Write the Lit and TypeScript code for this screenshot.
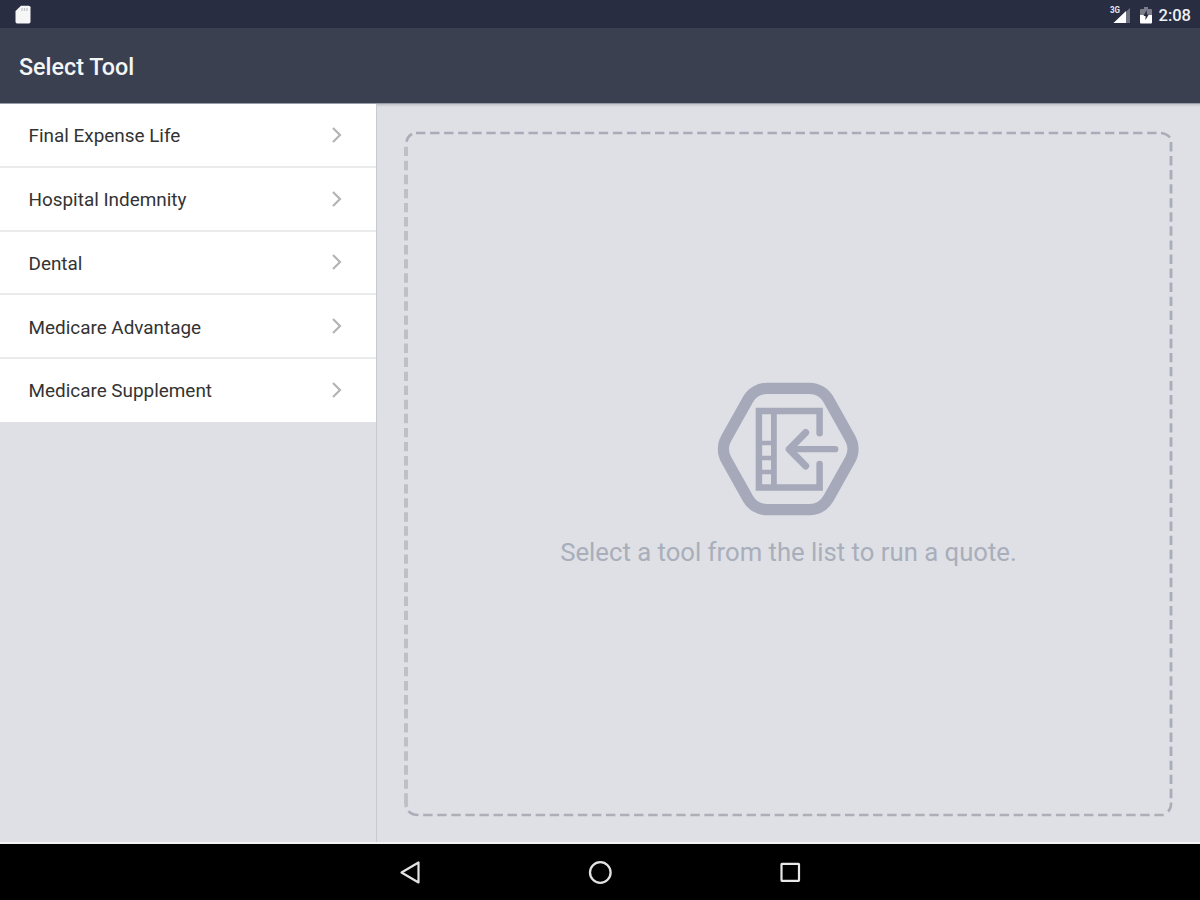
import { LitElement, html, css, svg } from "lit";
import { customElement, property } from "lit/decorators.js";

const TOOLS = [
  "Final Expense Life",
  "Hospital Indemnity",
  "Dental",
  "Medicare Advantage",
  "Medicare Supplement",
];

/** Android status bar: SD card on the left, signal, battery and clock on the right. */
@customElement("status-bar")
export class StatusBar extends LitElement {
  @property()
  time = "";

  static styles = css`
    :host {
      display: flex;
      align-items: center;
      justify-content: space-between;
      box-sizing: border-box;
      height: 28px;
      padding: 2px 9px 0 15px;
      background: #292d42;
      color: #eff0f3;
    }

    svg {
      display: block;
    }

    .system {
      display: flex;
      align-items: center;
    }

    .battery {
      margin: 0 7px 0 9px;
    }

    .time {
      padding-top: 1px;
      font-size: 16.5px;
      line-height: 26px;
      font-weight: 500;
    }

    .network {
      font-size: 9px;
      font-weight: 700;
    }
  `;

  render() {
    return html`
      <svg width="16" height="20" viewBox="0 0 16 20">
        <path d="M6 0.8h7.500q2 0 2 1.500v14.500q0 1.700-1.700 1.700H2.200q-1.700 0-1.700-1.700V6z" fill="#f6f6f6" />
        <path d="M7 3v3M9.500 3v3M12 3v3" stroke="#c4c5c9" stroke-width="1.300" />
      </svg>
      <div class="system">
        <svg width="21" height="20" viewBox="0 0 21 20">
          <path d="M20 3V18H4z" fill="#6e717f" />
          <path d="M16 6v12H3.500z" fill="#fff" />
          <text class="network" x="0" y="8" fill="#e4e5e8" textLength="10" lengthAdjust="spacingAndGlyphs">3G</text>
        </svg>
        <svg class="battery" width="12" height="18" viewBox="0 0 12 18">
          <path d="M4 1h4v2h3q1 0 1 1v5H0V4q0-1 1-1h3z" fill="#7b7e8a" />
          <path d="M0 9h12v7.500q0 1-1 1H1q-1 0-1-1z" fill="#fff" />
          <path d="M6.500 4L3.500 10H5.500v4L8.800 8.500H7z" fill="#292d42" />
        </svg>
        <span class="time">${this.time}</span>
      </div>
    `;
  }
}

@customElement("tool-list")
export class ToolList extends LitElement {
  @property({ type: Array })
  items: string[] = [];

  static styles = css`
    :host {
      display: block;
    }

    .row {
      display: flex;
      align-items: center;
      justify-content: space-between;
      box-sizing: border-box;
      height: 63.8px;
      padding: 0 34px 0 28.500px;
      background: #fff;
      border-bottom: 2px solid #eaebed;
      color: #333;
      font-size: 18.9px;
    }

    .row:last-child {
      height: 63px;
      border-bottom-color: #fff;
    }

    .label {
      padding-top: 2px;
    }

    .chevron {
      display: block;
    }
  `;

  render() {
    return this.items.map(
      (item) => html`
        <div class="row">
          <span class="label">${item}</span>
          <svg class="chevron" width="11" height="18" viewBox="0 0 11 18">
            <path d="M2 2l7 7-7 7" fill="none" stroke="#b4b4b4" stroke-width="2.200" />
          </svg>
        </div>
      `
    );
  }
}

@customElement("empty-panel")
export class EmptyPanel extends LitElement {
  static styles = css`
    :host {
      display: grid;
      overflow: hidden;
    }

    .frame,
    .content {
      grid-area: 1 / 1;
    }

    .frame {
      display: block;
    }

    .content {
      display: flex;
      flex-direction: column;
      align-items: center;
      padding-top: 266px;
    }

    .content svg {
      display: block;
    }

    .hint {
      margin: 4px 0 0;
      color: #a9aebb;
      font-size: 25.700px;
      line-height: 36px;
      white-space: nowrap;
    }
  `;

  private icon() {
    return svg`
      <g fill="none" stroke="#a5a9b9">
        <path stroke-width="11.300" d="M26.700 68L48.300 29.400A22 22 0 0 1 67.200 18.300H109.800A22 22 0 0 1 128.700 29.400L150.300 68A22 22 0 0 1 150.300 90L128.700 128.600A22 22 0 0 1 109.800 139.700H67.200A22 22 0 0 1 48.300 128.600L26.700 90A22 22 0 0 1 26.700 68Z" />
        <path stroke-width="6.500" stroke-linecap="round" d="M119.900 63.300V41H59.200V117.500H119.900V94" />
        <path stroke-width="5.800" d="M74.200 41V117.500" />
        <path stroke-width="4.500" d="M59 73H74M59 88H74M59 102H74" />
        <path stroke-width="6.300" stroke-linecap="round" stroke-linejoin="round" d="M135.500 79.200H90" />
        <path stroke-width="7" stroke-linecap="round" stroke-linejoin="round" d="M106 62.500L89.500 79.200L106 96" />
      </g>
    `;
  }

  render() {
    return html`
      <svg class="frame" width="823" height="740" viewBox="377 104 823 740">
        <g fill="none" stroke-dasharray="9.400 4.660">
          <path d="M416 133H1158" stroke="#a9acb8" stroke-width="2.600" />
          <path d="M1171 142V799" stroke="#a9adba" stroke-width="2.800" />
          <path d="M423.200 815H1164" stroke="#acafb8" stroke-width="2.600" />
          <path d="M406 146.700V790" stroke="#bec0c6" stroke-width="4" />
        </g>
        <g fill="none" stroke="#abaeb9" stroke-width="2.600">
          <path d="M406.500 141.700Q407.500 136.500 412 134" />
          <path d="M1161 133Q1166.500 133.500 1170 137.500" />
          <path d="M1171 802.500Q1171.500 808 1168 811.500" />
          <path d="M408.500 811Q411.500 815 418.500 815" />
        </g>
        <path d="M406 793.300V803Q406 805.500 406.700 807" fill="none" stroke="#bec0c6" stroke-width="3.800" />
      </svg>
      <div class="content">
        <svg width="180" height="160" viewBox="-0.700 0 180 160">${this.icon()}</svg>
        <p class="hint">Select a tool from the list to run a quote.</p>
      </div>
    `;
  }
}

@customElement("nav-bar")
export class NavBar extends LitElement {
  static styles = css`
    :host {
      display: flex;
      align-items: center;
      justify-content: center;
      gap: 166px;
      height: 56px;
      background: #000;
    }

    svg {
      display: block;
    }
  `;

  render() {
    return html`
      <svg width="24" height="24" viewBox="0 -0.500 24 24">
        <path d="M20.500 2V22L3.500 12z" fill="none" stroke="#e2e2e2" stroke-width="2.200" stroke-linejoin="round" />
      </svg>
      <svg width="24" height="24" viewBox="0 -0.500 24 24">
        <circle cx="12.300" cy="12" r="10.300" fill="none" stroke="#e2e2e2" stroke-width="2.300" />
      </svg>
      <svg width="24" height="24" viewBox="0 -0.500 24 24">
        <rect x="3.500" y="3.300" width="17.500" height="17" rx="0.500" fill="none" stroke="#e8e8e8" stroke-width="2.200" />
      </svg>
    `;
  }
}

@customElement("app-root")
export class AppRoot extends LitElement {
  static styles = css`
    :host {
      display: flex;
      flex-direction: column;
      height: 900px;
      overflow: hidden;
      background: #dee0e5;
      font-family: Roboto, "Liberation Sans", sans-serif;
    }

    .toolbar {
      box-sizing: border-box;
      height: 75px;
      padding: 2px 19px 0;
      background: #3a4050;
      color: #f4f5f7;
    }

    h1 {
      margin: 0;
      font-size: 23.3px;
      line-height: 75px;
      font-weight: 500;
    }

    .main {
      flex: 1;
      display: grid;
      grid-template-columns: 377px 1fr;
      min-height: 0;
      box-sizing: border-box;
      border-top: 1px solid #989ba5;
      border-bottom: 2px solid #f3f3f4;
      box-shadow: inset 0 3px 3px -2px #b9bbc1;
    }

    .sidebar {
      border-right: 1px solid #c8cacf;
    }
  `;

  render() {
    return html`
      <status-bar time="2:08"></status-bar>
      <header class="toolbar"><h1>Select Tool</h1></header>
      <main class="main">
        <tool-list class="sidebar" .items=${TOOLS}></tool-list>
        <empty-panel></empty-panel>
      </main>
      <nav-bar></nav-bar>
    `;
  }
}

declare global {
  interface HTMLElementTagNameMap {
    "app-root": AppRoot;
    "status-bar": StatusBar;
    "tool-list": ToolList;
    "empty-panel": EmptyPanel;
    "nav-bar": NavBar;
  }
}
